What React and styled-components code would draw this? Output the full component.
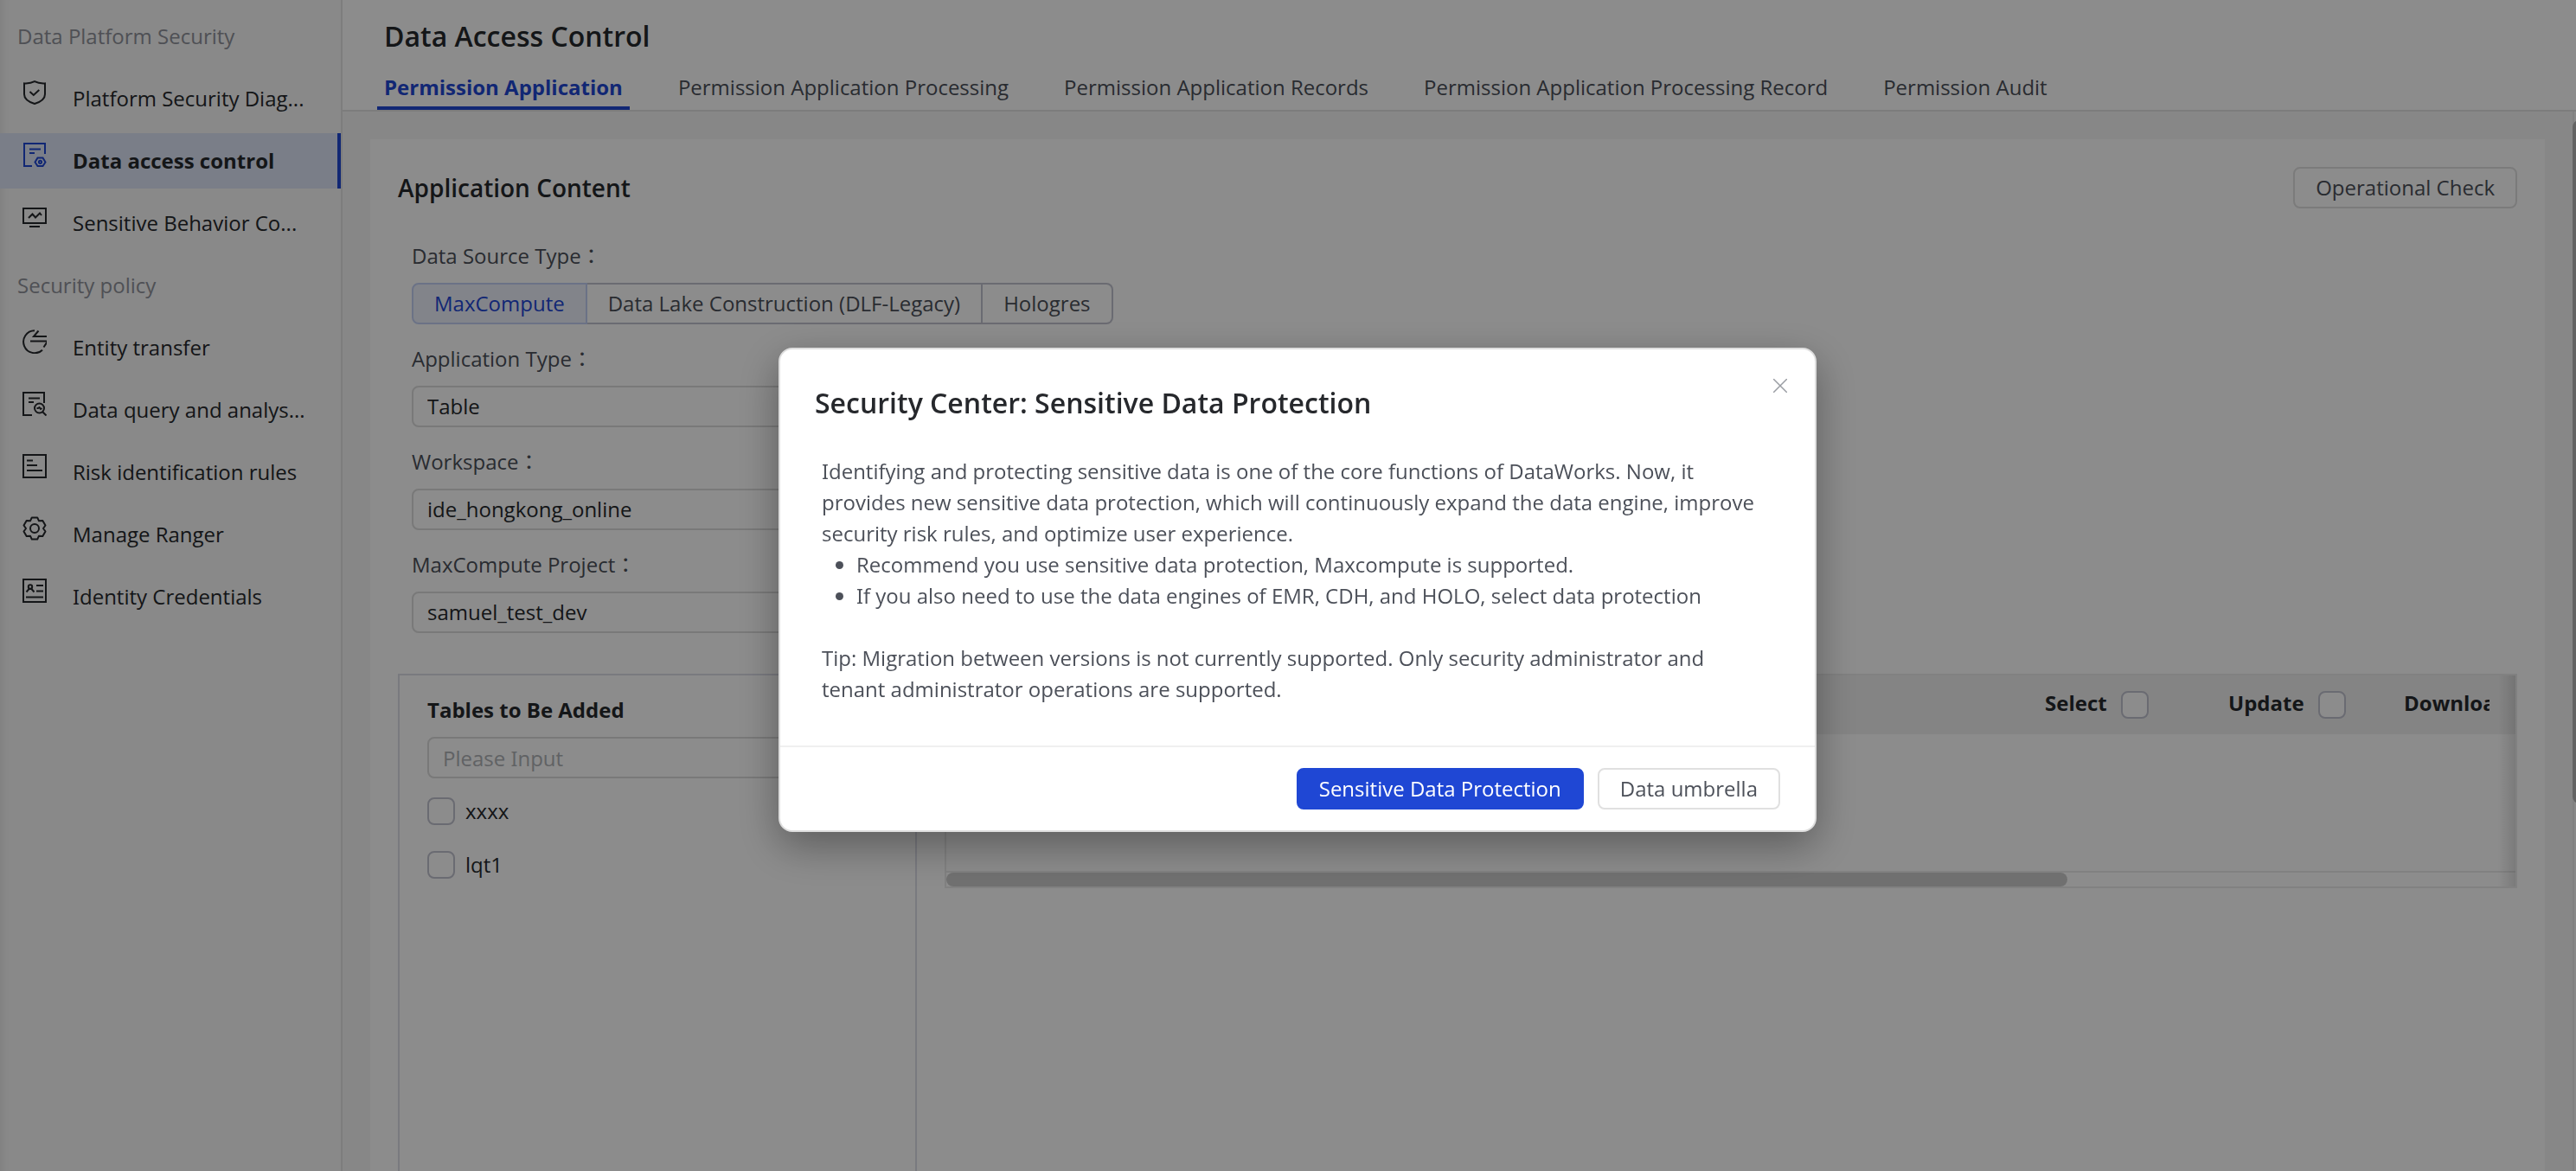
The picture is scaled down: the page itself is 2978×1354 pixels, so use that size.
import React, { useState } from 'react'
import styled, { createGlobalStyle, css } from 'styled-components'

const primary = '#1f47d4'
const ink = '#26282c'
const body = '#4c5059'
const line = '#e2e2e2'
const controlLine = '#c2c3cf'

const GlobalStyle = createGlobalStyle`
  * { box-sizing: border-box; }
  body {
    margin: 0;
    overflow: hidden;
    color: ${body};
    font-family: "Open Sans", "Noto Sans", "Noto Sans CJK TC", sans-serif;
    font-feature-settings: "ss03";
    font-size: 24px;
    line-height: 36px;
  }
  button, input, select { font: inherit; font-feature-settings: inherit; color: inherit; }
  h1, h2, h3, p, ul { margin: 0; padding: 0; }
`

const Page = styled.div`
  display: flex;
  height: 100vh;
  overflow: hidden;
  background: #f6f6f6;
`

/* sidebar */

const Sidebar = styled.nav`
  flex: 0 0 396px;
  border-right: 2px solid #e4e4e4;
  background: #f9f9f9;
  box-shadow: inset 10px 0 10px -8px rgba(0, 0, 0, 0.08);
`

const SectionTitle = styled.div`
  height: 64px;
  margin: 10px 0 8px;
  padding: 14px 20px;
  color: #90939b;
  &:not(:first-child) { margin-top: 8px; }
`

const MenuItem = styled.a`
  display: flex;
  gap: 30px;
  height: 64px;
  margin-bottom: 8px;
  padding: 0 20px 0 26px;
  color: ${ink};
  text-decoration: none;
  white-space: nowrap;
  svg {
    flex: none;
    margin-top: 11px;
  }
  span { line-height: 64px; }
  ${p => p.$active && css`
    border-right: 4px solid ${primary};
    background: #dee5f8;
    font-weight: bold;
    svg { color: ${primary}; }
  `}
`

/* header */

const Main = styled.main`
  display: flex;
  flex-direction: column;
  flex: 1;
  min-width: 0;
`

const Header = styled.header`
  padding: 20px 40px 0;
  border-bottom: 2px solid ${line};
  background: #fff;
`

const PageTitle = styled.h1`
  margin: 0 8px 16px;
  color: ${ink};
  font-size: 32px;
  font-weight: 600;
  line-height: 44px;
`

const Tabs = styled.div`
  display: flex;
  gap: 48px;
`

const Tab = styled.button`
  padding: 3px 8px 4px;
  border: 0;
  border-bottom: 4px solid transparent;
  background: none;
  ${p => p.$active && css`
    border-color: ${primary};
    color: ${primary};
    font-weight: bold;
  `}
`

const Scroller = styled.div`
  display: flex;
  flex: 1;
  min-height: 0;
`

const PageRail = styled.div`
  flex: 0 0 4px;
  overflow: hidden;
  background: #fafafa;
  box-shadow: inset 2px 0 0 #ececec;
  padding-top: 10px;
  &::before {
    content: "";
    display: block;
    width: 16px;
    height: 65%;
    border-radius: 8px;
    background: #b4b4b4;
  }
`

/* card */

const Card = styled.section`
  flex: 1;
  min-width: 0;
  margin: 32px 32px 0;
  padding: 32px;
  background: #fff;
`

const CardHead = styled.div`
  display: flex;
  align-items: center;
  justify-content: space-between;
  margin-bottom: 37px;
  h2 {
    color: ${ink};
    font-size: 28px;
    font-weight: 600;
  }
`

const Button = styled.button`
  height: 48px;
  padding: 0 24px;
  border: 2px solid ${p => p.$primary ? primary : '#e0e0e0'};
  border-radius: 8px;
  background: ${p => p.$primary ? primary : '#fff'};
  color: ${p => p.$primary ? '#fff' : body};
  line-height: 44px;
`

const Field = styled.div`
  display: flex;
  flex-direction: column;
  align-items: flex-start;
  gap: 13px;
  margin: 0 16px 22px;
`

const FieldLabel = styled.label`
  display: block;
`

const RadioGroup = styled.div`
  display: flex;
  height: 48px;
`

const Radio = styled.label`
  padding: 0 24px;
  border: 2px solid ${controlLine};
  border-left-width: 0;
  line-height: 44px;
  cursor: pointer;
  &:first-child {
    border-left-width: 2px;
    border-radius: 8px 0 0 8px;
  }
  &:last-child { border-radius: 0 8px 8px 0; }
  input {
    position: absolute;
    opacity: 0;
  }
  ${p => p.$checked && css`
    border-color: #c4d0f4;
    background: #edf1fc;
    color: ${primary};
  `}
`

const Select = styled.select`
  width: 800px;
  max-width: 100%;
  height: 48px;
  padding: 0 16px;
  border: 2px solid #dcdcdc;
  border-radius: 8px;
  background: #fff;
  color: ${ink};
  appearance: none;
`

const Columns = styled.div`
  display: grid;
  grid-template-columns: 600px 1fr;
  align-items: start;
  gap: 32px;
  margin-top: 47px;
`

const Picker = styled.div`
  min-height: 720px;
  padding: 22px 32px;
  border: 2px solid #dddee8;
  h3 {
    margin-bottom: 13px;
    color: ${ink};
    font-size: 24px;
    font-weight: bold;
  }
`

const TextInput = styled.input`
  width: 100%;
  height: 48px;
  margin-bottom: 22px;
  padding: 0 16px;
  border: 2px solid #dcdcdc;
  border-radius: 8px;
  background: #fff;
  &::placeholder {
    color: #b0b2b7;
    opacity: 1;
  }
`

const Checkbox = styled.input.attrs({ type: 'checkbox' })`
  flex: none;
  width: 32px;
  height: 32px;
  margin: 0;
  border: 2px solid ${controlLine};
  border-radius: 8px;
  background: #fff;
  appearance: none;
`

const Option = styled.label`
  display: flex;
  align-items: center;
  gap: 12px;
  height: 32px;
  margin-bottom: 30px;
  color: ${ink};
`

const TableBox = styled.div`
  position: relative;
  border: 2px solid #ebebeb;
  &::after {
    content: "";
    position: absolute;
    inset: 0 0 0 auto;
    width: 20px;
    background: linear-gradient(to right, transparent, rgba(0, 0, 0, 0.12));
  }
`

const Table = styled.table`
  width: 100%;
  height: 228px;
  border-collapse: separate;
  border-spacing: 0;
  table-layout: fixed;
  border-bottom: 2px solid #ebebeb;
  th {
    height: 68px;
    padding: 0 16px;
    overflow: hidden;
    background: #f1f1f1;
    color: ${ink};
    text-align: left;
    white-space: nowrap;
  }
  th:last-child { padding-right: 0; }
`

const HeadCell = styled.label`
  display: flex;
  align-items: flex-start;
  gap: 16px;
  height: 32px;
  line-height: 28px;
  overflow: hidden;
  margin-right: ${p => p.$cut ? '30px' : 0};
`

const TableRail = styled.div`
  display: grid;
  grid-template-columns: 5fr 2fr;
  height: 16px;
  &::before {
    content: "";
    border-radius: 8px;
    background: #cdcdcd;
  }
`

/* dialog */

const Overlay = styled.div`
  position: fixed;
  inset: 0;
  display: flex;
  align-items: center;
  justify-content: center;
  padding: 10px 0 0 22px;
  background: rgba(0, 0, 0, 0.45);
`

const Dialog = styled.div`
  position: relative;
  width: 1200px;
  max-width: 100%;
  border: 2px solid #dedede;
  border-radius: 16px;
  background: #fff;
  box-shadow: 0 16px 48px rgba(0, 0, 0, 0.35);
  h2 {
    padding: 40px 40px 0;
    color: ${ink};
    font-size: 32px;
    font-weight: 600;
    line-height: 44px;
  }
`

const DialogBody = styled.div`
  padding: 39px 56px 47px 48px;
  ul {
    margin-bottom: 36px;
    padding-left: 40px;
  }
`

const DialogFoot = styled.footer`
  display: flex;
  justify-content: flex-end;
  gap: 16px;
  padding: 24px 40px;
  border-top: 2px solid #f0f0f0;
`

const Close = styled.button`
  position: absolute;
  top: 26px;
  right: 24px;
  display: flex;
  padding: 8px;
  border: 0;
  background: none;
  color: #9a9da3;
`

const Icon = ({ children }) => (
  <svg width="28" height="28" viewBox="0 0 28 28" fill="none" stroke="currentColor" strokeWidth="2" aria-hidden="true">
    {children}
  </svg>
)

const icons = {
  shield: (
    <Icon>
      <path d="M2 3.4c5 .3 9-.6 12-2.2 3 1.600 7 2.500 12 2.200v12.600c0 5-5.500 9-12 11C7.500 25 2 21 2 16z" />
      <path d="M8.500 13l4.300 4 6.500-6" />
    </Icon>
  ),
  control: (
    <Icon>
      <path d="M26 13V1H2v26h9M8 7.500h13M8 12h6" />
      <path d="M17.500 17.500h6l3 5-3 4.500h-6l-3-4.500z" />
      <circle cx="20.500" cy="22.300" r="1.600" />
    </Icon>
  ),
  monitor: (
    <Icon>
      <path d="M1 4h26v17H1zM8 25h12" />
      <path d="M7 15l4.500-4.500 3.500 4 5-5 2 2.500" />
    </Icon>
  ),
  transfer: (
    <Icon>
      <path d="M14 1.200a13 13 0 1 0 9 22.500M18.500 1.500L13 8h17M9 13.500h20l-4.500 7" />
    </Icon>
  ),
  query: (
    <Icon>
      <path d="M25 13V1H1v26h10M7 7.500h13M7 12h6" />
      <circle cx="19.500" cy="19" r="5.500" />
      <path d="M23 23l4.500 4.500M16.500 19h1.500l1.500-1 1.500 2 1.500-1" />
    </Icon>
  ),
  rules: (
    <Icon>
      <path d="M1 1h26v26H1zM5 7.500h7M5 13h12M5 19h18" />
    </Icon>
  ),
  gear: (
    <Icon>
      <path d="M10.800 1.400H17.200L19 5.300L23.300 4.900L26.500 10.500L24 14L26.500 17.500L23.300 23.100L19 22.700L17.200 26.600H10.800L9 22.700L4.700 23.100L1.500 17.500L4 14L1.500 10.500L4.700 4.900L9 5.300z" strokeLinejoin="round" />
      <circle cx="14" cy="14" r="5" />
    </Icon>
  ),
  identity: (
    <Icon>
      <path d="M1 1h26v26H1zM16 8h8M16 14.500h8M4 21.500h20" />
      <circle cx="9" cy="9.500" r="2.200" />
      <path d="M4.500 15.500l3-3.500h3l3 3.500" />
    </Icon>
  )
}

const menu = [
  {
    title: 'Data Platform Security',
    items: [
      { title: 'Platform Security Diag...', icon: 'shield' },
      { title: 'Data access control', icon: 'control' },
      { title: 'Sensitive Behavior Co...', icon: 'monitor' }
    ]
  },
  {
    title: 'Security policy',
    items: [
      { title: 'Entity transfer', icon: 'transfer' },
      { title: 'Data query and analys...', icon: 'query' },
      { title: 'Risk identification rules', icon: 'rules' },
      { title: 'Manage Ranger', icon: 'gear' },
      { title: 'Identity Credentials', icon: 'identity' }
    ]
  }
]

const tabs = [
  'Permission Application',
  'Permission Application Processing',
  'Permission Application Records',
  'Permission Application Processing Record',
  'Permission Audit'
]

const sources = ['MaxCompute', 'Data Lake Construction (DLF-Legacy)', 'Hologres']

const selects = [
  { id: 'type', label: 'Application Type', value: 'Table' },
  { id: 'workspace', label: 'Workspace', value: 'ide_hongkong_online' },
  { id: 'project', label: 'MaxCompute Project', value: 'samuel_test_dev' }
]

const App = () => {
  const [tab, setTab] = useState(tabs[0])
  const [source, setSource] = useState(sources[0])
  const [open, setOpen] = useState(true)
  const close = () => setOpen(false)
  return (
    <>
      <GlobalStyle />
      <Page>
        <Sidebar>
          {menu.map(section => (
            <React.Fragment key={section.title}>
              <SectionTitle>{section.title}</SectionTitle>
              {section.items.map(item => (
                <MenuItem key={item.title} href="#" $active={item.icon === 'control'}>
                  {icons[item.icon]}
                  <span>{item.title}</span>
                </MenuItem>
              ))}
            </React.Fragment>
          ))}
        </Sidebar>
        <Main>
          <Header>
            <PageTitle>Data Access Control</PageTitle>
            <Tabs role="tablist">
              {tabs.map(t => (
                <Tab key={t} role="tab" aria-selected={t === tab} $active={t === tab} onClick={() => setTab(t)}>{t}</Tab>
              ))}
            </Tabs>
          </Header>
          <Scroller>
            <Card>
              <CardHead>
                <h2>Application Content</h2>
                <Button>Operational Check</Button>
              </CardHead>
              <Field>
                <FieldLabel as="span" id="source">Data Source Type：</FieldLabel>
                <RadioGroup role="radiogroup" aria-labelledby="source">
                  {sources.map(s => (
                    <Radio key={s} $checked={s === source}>
                      <input type="radio" name="source" checked={s === source} onChange={() => setSource(s)} />
                      {s}
                    </Radio>
                  ))}
                </RadioGroup>
              </Field>
              {selects.map(s => (
                <Field key={s.id}>
                  <FieldLabel htmlFor={s.id}>{s.label}：</FieldLabel>
                  <Select id={s.id}>
                    <option>{s.value}</option>
                  </Select>
                </Field>
              ))}
              <Columns>
                <Picker>
                  <h3>Tables to Be Added</h3>
                  <TextInput aria-label="Tables to Be Added" placeholder="Please Input" />
                  <Option><Checkbox />xxxx</Option>
                  <Option><Checkbox />lqt1</Option>
                </Picker>
                <TableBox>
                  <Table>
                    <colgroup>
                      <col />
                      <col width="212" />
                      <col width="203" />
                      <col width="145" />
                    </colgroup>
                    <thead>
                      <tr>
                        <th />
                        <th><HeadCell>Select<Checkbox /></HeadCell></th>
                        <th><HeadCell>Update<Checkbox /></HeadCell></th>
                        <th><HeadCell $cut>Download</HeadCell></th>
                      </tr>
                    </thead>
                    <tbody>
                      <tr><td colSpan="4" /></tr>
                    </tbody>
                  </Table>
                  <TableRail />
                </TableBox>
              </Columns>
            </Card>
            <PageRail />
          </Scroller>
        </Main>
      </Page>
      {open && (
        <Overlay>
          <Dialog role="dialog" aria-modal="true" aria-labelledby="dialog-title">
            <Close aria-label="Close" onClick={close}>
              <svg width="16" height="16" viewBox="0 0 16 16" stroke="currentColor" strokeWidth="1.500">
                <path d="M0 0l16 16M16 0L0 16" />
              </svg>
            </Close>
            <h2 id="dialog-title">Security Center: Sensitive Data Protection</h2>
            <DialogBody>
              <p>
                Identifying and protecting sensitive data is one of the core functions of DataWorks. Now, it
                provides new sensitive data protection, which will continuously expand the data engine, improve
                security risk rules, and optimize user experience.
              </p>
              <ul>
                <li>Recommend you use sensitive data protection, Maxcompute is supported.</li>
                <li>If you also need to use the data engines of EMR, CDH, and HOLO, select data protection</li>
              </ul>
              <p>
                Tip: Migration between versions is not currently supported. Only security administrator and
                tenant administrator operations are supported.
              </p>
            </DialogBody>
            <DialogFoot>
              <Button $primary onClick={close}>Sensitive Data Protection</Button>
              <Button onClick={close}>Data umbrella</Button>
            </DialogFoot>
          </Dialog>
        </Overlay>
      )}
    </>
  )
}

export default App
